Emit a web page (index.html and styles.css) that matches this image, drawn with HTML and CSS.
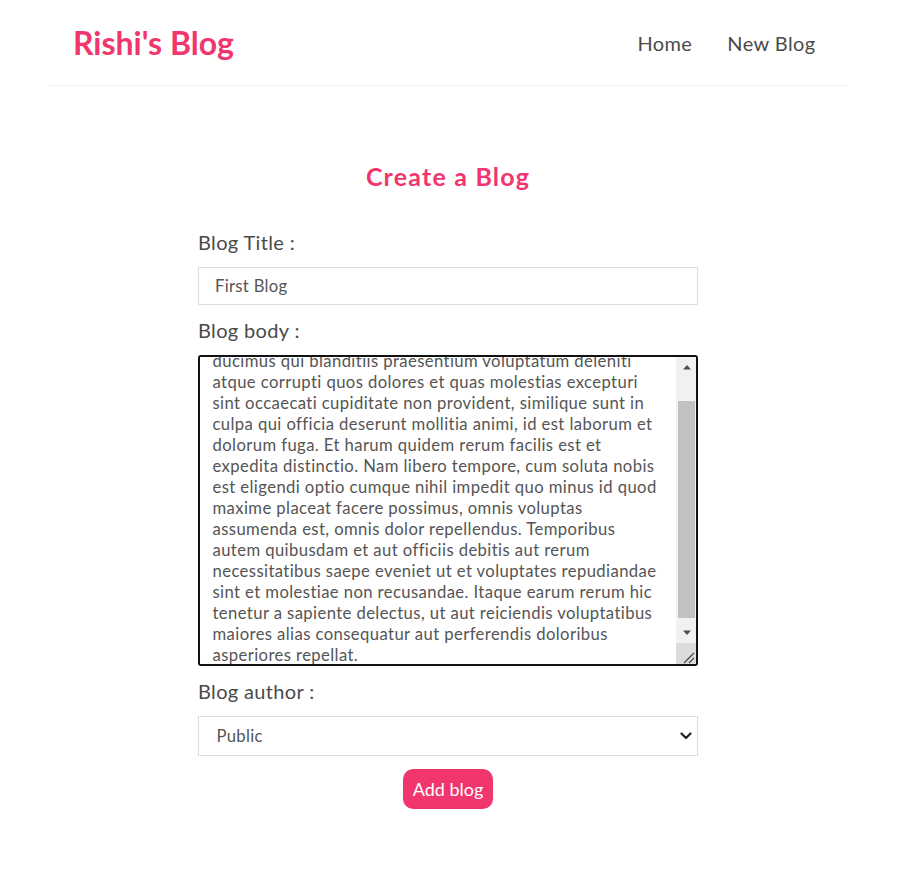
FILE: index.html
```html
<!DOCTYPE html>
<html lang="en">
<head>
<meta charset="utf-8">
<title>Rishi's Blog</title>
<link rel="stylesheet" href="styles.css">
</head>
<body>
<div class="app">
  <nav class="navbar">
    <h1 class="brand">Rishi's Blog</h1>
    <div class="links">
      <a href="#" class="nav-link">Home</a>
      <a href="#" class="nav-link">New Blog</a>
    </div>
  </nav>
  <main class="content">
    <div class="create">
      <h2 class="create-title">Create a Blog</h2>
      <form class="create-form">
        <label class="field-label">Blog Title :</label>
        <input class="field field-text" type="text" value="First Blog">
        <label class="field-label">Blog body :</label>
        <div class="body-wrap">
          <textarea class="field field-body">At vero eos et accusamus et iusto odio dignissimos
ducimus qui blanditiis praesentium voluptatum deleniti
atque corrupti quos dolores et quas molestias excepturi
sint occaecati cupiditate non provident, similique sunt in
culpa qui officia deserunt mollitia animi, id est laborum et
dolorum fuga. Et harum quidem rerum facilis est et
expedita distinctio. Nam libero tempore, cum soluta nobis
est eligendi optio cumque nihil impedit quo minus id quod
maxime placeat facere possimus, omnis voluptas
assumenda est, omnis dolor repellendus. Temporibus
autem quibusdam et aut officiis debitis aut rerum
necessitatibus saepe eveniet ut et voluptates repudiandae
sint et molestiae non recusandae. Itaque earum rerum hic
tenetur a sapiente delectus, ut aut reiciendis voluptatibus
maiores alias consequatur aut perferendis doloribus
asperiores repellat.</textarea>
          <div class="scrollbar" aria-hidden="true">
            <div class="sb-btn">
              <svg width="10" height="6" viewBox="0 0 10 6"><polygon points="1,5.5 9,5.5 5,1" fill="#505050"/></svg>
            </div>
            <div class="sb-track"><div class="sb-thumb"></div></div>
            <div class="sb-btn">
              <svg width="10" height="6" viewBox="0 0 10 6"><polygon points="1,0.5 9,0.5 5,5" fill="#505050"/></svg>
            </div>
            <div class="sb-corner">
              <svg width="19" height="21" viewBox="0 0 19 21"><path d="M8 20 L18 10 M13 20 L18 15" stroke="#444" stroke-width="1.2" fill="none"/></svg>
            </div>
          </div>
        </div>
        <label class="field-label">Blog author :</label>
        <div class="select-wrap">
          <select class="field field-select">
            <option>Public</option>
            <option>Rishi</option>
          </select>
          <svg class="select-chevron" width="12" height="8" viewBox="0 0 12 8"><path d="M1.5 1.5 L6 6 L10.5 1.5" fill="none" stroke="#222" stroke-width="2.2" stroke-linecap="round" stroke-linejoin="round"/></svg>
        </div>
        <button type="button" class="add-btn">Add blog</button>
      </form>
    </div>
  </main>
</div>
<script src="script.js"></script>
</body>
</html>
```

FILE: styles.css
```css
* {
  margin: 0;
  font-family: "Lato", "Open Sans", sans-serif;
  color: #333;
}
body {
  margin: 0 17px 0 0;
  background: #fff;
}
.navbar {
  max-width: 800px;
  box-sizing: border-box;
  margin: 0 auto;
  padding: 25px;
  display: flex;
  align-items: center;
  border-bottom: 1px solid #f2f2f2;
}
.brand {
  color: #f1356d;
  font-size: 32px;
  line-height: 35px;
  font-weight: 700;
}
.links {
  margin-left: auto;
  display: flex;
}
.nav-link {
  margin-left: 20px;
  padding: 7.5px;
  text-decoration: none;
  font-size: 20px;
  line-height: 20px;
  letter-spacing: 0.4px;
  color: #4a4a4a;
}
.content {
  max-width: 800px;
  box-sizing: border-box;
  margin: 50px auto;
  padding: 25px;
}
.create {
  max-width: 500px;
  margin: 0 auto;
}
.create-title {
  text-align: center;
  font-size: 25px;
  line-height: 31px;
  font-weight: 700;
  letter-spacing: 1.2px;
  color: #f1356d;
  margin-bottom: 37.5px;
}
.field-label {
  display: block;
  font-size: 20px;
  line-height: 25px;
  letter-spacing: 0.35px;
  color: #4a4a4a;
}
.field {
  display: block;
  width: 100%;
  box-sizing: border-box;
  margin: 12.5px 0;
  border: 1.25px solid #ddd;
  font-size: 16.67px;
  color: #555;
  background: #fff;
}
.field-text {
  height: 38px;
  padding: 7.5px 16px;
  letter-spacing: 0.3px;
}
.body-wrap {
  position: relative;
  margin: 12.5px 0;
}
.field-body {
  height: 311px;
  margin: 0;
  padding: 7.5px 24px 7.5px 12.5px;
  line-height: 21px;
  letter-spacing: 0.4px;
  border: 2px solid #111;
  border-radius: 3px;
  outline: none;
  resize: none;
}
.field-body::-webkit-scrollbar {
  display: none;
}
.scrollbar {
  position: absolute;
  top: 2px;
  right: 2px;
  bottom: 2px;
  width: 20px;
  display: flex;
  flex-direction: column;
  background: #f1f1f1;
  border-top-right-radius: 2px;
}
.sb-btn {
  height: 20px;
  display: flex;
  align-items: center;
  justify-content: center;
  padding-left: 1px;
}
.sb-track {
  flex: 1;
  padding: 24px 1px 5px 2px;
  display: flex;
}
.sb-thumb {
  flex: 1;
  background: #c1c1c1;
}
.sb-corner {
  height: 21px;
  background: #dcdcdc;
  display: flex;
}
.select-wrap {
  position: relative;
}
.field-select {
  height: 40px;
  padding: 7.5px 17.5px;
  -webkit-appearance: none;
  appearance: none;
  letter-spacing: 0.3px;
}
.select-chevron {
  position: absolute;
  right: 6px;
  top: 16px;
  pointer-events: none;
}
.add-btn {
  display: block;
  margin: 0 auto;
  background: #f1356d;
  color: #fff;
  border: 0;
  border-radius: 10px;
  padding: 10px;
  font-size: 18px;
  line-height: 20px;
  cursor: pointer;
}
```

FILE: script.js
```js
var body = document.querySelector('.field-body');
body.scrollTop = body.scrollHeight - body.clientHeight - 9;
```
